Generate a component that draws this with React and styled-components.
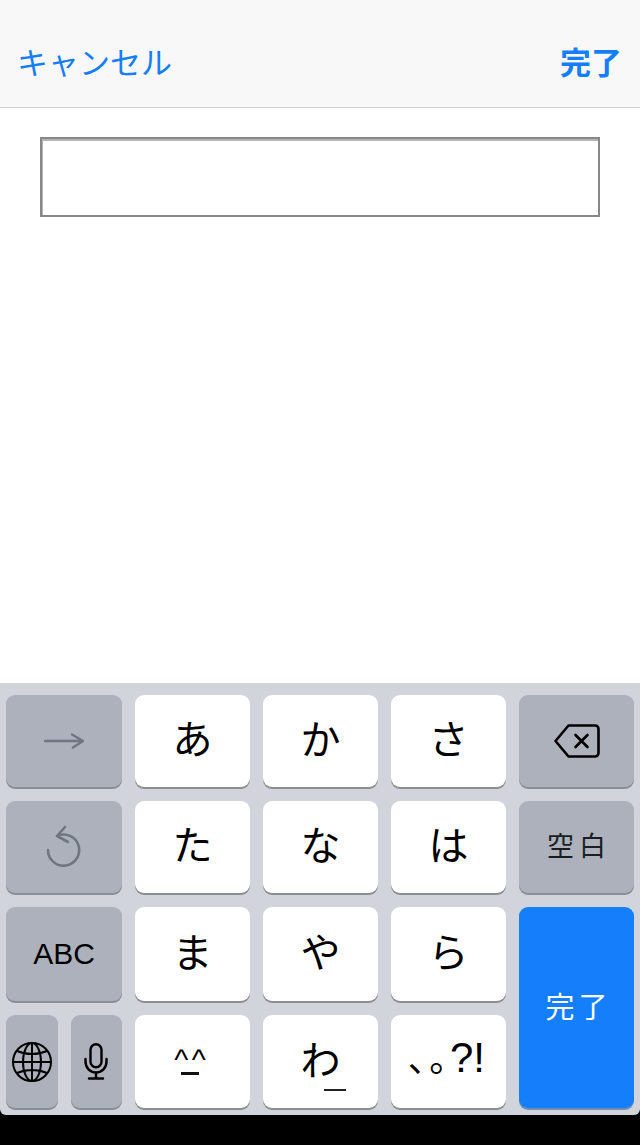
import React from 'react';
import styled, { createGlobalStyle } from 'styled-components';

const GlobalStyle = createGlobalStyle`
  html, body {
    margin: 0;
    padding: 0;
    background: #fff;
    font-family: "Liberation Sans", "Noto Sans CJK JP", sans-serif;
  }
`;

const BLUE = '#157efb';
const KANA_FONT = '"Noto Sans CJK JP", sans-serif';

const Page = styled.div`
  display: flex;
  flex-direction: column;
  width: 640px;
  height: 1145px;
  overflow: hidden;
`;

const NavBar = styled.header`
  display: flex;
  align-items: center;
  justify-content: space-between;
  box-sizing: border-box;
  height: 108px;
  padding: 14px 18px 0 17px;
  background: #f8f8f8;
  border-bottom: 1px solid #cfcfcf;
`;

const NavButton = styled.span`
  font-family: ${KANA_FONT};
  font-size: 31px;
  line-height: 38px;
  color: ${BLUE};
  font-weight: ${(props) => (props.$bold ? 700 : 400)};
`;

const Content = styled.main`
  flex: 1;
  padding: 29px 40px 0;
  background: #fff;
`;

const TextBox = styled.input`
  display: block;
  box-sizing: border-box;
  width: 560px;
  height: 80px;
  background: #fff;
  border: 2px solid #888;
  box-shadow: inset 1px 2px 0 #b4b4b4;
  border-radius: 0;
  outline: none;
`;

const Dock = styled.div`
  background: #000;
  padding-bottom: 30px;
`;

const Keyboard = styled.div`
  display: grid;
  grid-template-columns: 116px repeat(4, 115px);
  grid-template-rows: 92px 92px 94px 93px;
  gap: 14px 13px;
  box-sizing: border-box;
  height: 432px;
  padding: 12px 6px 7px;
  background: #d1d4db;
  border-bottom-left-radius: 6px;
  border-bottom-right-radius: 6px;
`;

const Key = styled.div`
  position: relative;
  display: flex;
  align-items: center;
  justify-content: center;
  min-width: 0;
  border-radius: 9px;
  color: #000;
  background: ${(props) => (props.$fn ? '#adb1bc' : '#fff')};
  box-shadow: 0 2px 0 ${(props) => (props.$fn ? '#8a8e98' : '#8b8d91')};
`;

const Kana = styled.span`
  font-family: ${KANA_FONT};
  font-size: 40px;
  line-height: 48px;
  margin-bottom: 8px;
`;

const LatinLabel = styled.span`
  font-family: "Liberation Sans", sans-serif;
  font-size: 30px;
  line-height: 36px;
`;

const SpaceLabel = styled.span`
  font-family: ${KANA_FONT};
  font-size: 27px;
  letter-spacing: 5px;
  margin: 0 -5px 5px 0;
  color: #1a1d22;
`;

const DoneKey = styled(Key)`
  grid-column: 5;
  grid-row: 3 / span 2;
  background: ${BLUE};
  box-shadow: 0 2px 0 #6f8fb8;
`;

const DoneLabel = styled.span`
  font-family: ${KANA_FONT};
  font-size: 29px;
  letter-spacing: 4px;
  margin: 0 -4px 6px 0;
  color: #fff;
`;

const SplitCell = styled.div`
  display: flex;
  gap: 13px;
`;

const SmallKey = styled(Key)`
  flex: 1;
`;

const Smiley = styled.span`
  display: flex;
  flex-direction: column;
  align-items: center;
  margin-right: 5px;
`;

const SmileyEyes = styled.span`
  font-family: "Liberation Sans", sans-serif;
  font-size: 30px;
  line-height: 24px;
  letter-spacing: 3.5px;
  margin-right: -3.5px;
`;

const SmileyMouth = styled.span`
  width: 18px;
  height: 2.5px;
  background: #111;
`;

const WaDash = styled.span`
  position: absolute;
  left: 61px;
  bottom: 17px;
  width: 22px;
  height: 2px;
  background: #222;
`;

const PunctRow = styled.span`
  display: flex;
  align-items: baseline;
  margin: 0 4px 9px 0;
`;

const PunctKana = styled.span`
  font-family: ${KANA_FONT};
  font-size: 36px;
  line-height: 44px;
  letter-spacing: 3px;
  font-feature-settings: "palt";
`;

const PunctLatin = styled.span`
  font-family: "Liberation Sans", sans-serif;
  font-size: 42px;
  line-height: 44px;
`;

const GlyphSvg = styled.svg`
  display: block;
  fill: none;
  stroke: ${(props) => props.$color || '#000'};
  stroke-width: ${(props) => props.$weight || 2};
  stroke-linecap: round;
  stroke-linejoin: round;
`;

const ArrowIcon = () => (
  <GlyphSvg width="40" height="16" viewBox="0 0 40 16" $color="#6f7681" $weight={2.4}>
    <path d="M1 8H39M28 1.5L39 8L29 14.5" />
  </GlyphSvg>
);

const UndoIcon = () => (
  <GlyphSvg width="40" height="48" viewBox="0 0 40 48" $color="#6f7681" $weight={2.6}>
    <path d="M13 13A15.6 15.6 0 1 1 4 27M21 4L13 13L24 19" />
  </GlyphSvg>
);

const DeleteIcon = () => (
  <GlyphSvg width="46" height="34" viewBox="0 0 46 34" $weight={2.6}>
    <path d="M14.5 1.5H41A3.5 3.5 0 0 1 44.5 5V29A3.5 3.5 0 0 1 41 32.5H14.5L1.5 17Z" />
    <path d="M21.5 11L33.5 23M33.5 11L21.5 23" />
  </GlyphSvg>
);

const GlobeIcon = () => (
  <GlyphSvg width="40" height="40" viewBox="0 0 40 40" $weight={2}>
    <circle cx="20" cy="20" r="19" />
    <ellipse cx="20" cy="20" rx="9" ry="19" />
    <path d="M20 1V39M1 20H39M5 9C14 13 26 13 35 9M5 31C14 27 26 27 35 31" />
  </GlyphSvg>
);

const MicIcon = () => (
  <GlyphSvg width="24" height="37" viewBox="0 0 24 37" $weight={2.4}>
    <rect x="6.5" y="1.2" width="11" height="23" rx="5.5" />
    <path d="M1.5 16V18.5C1.5 25 6 29.5 12 29.5C18 29.5 22.5 25 22.5 18.5V16M12 29.5V35.5M5 35.5H19" />
  </GlyphSvg>
);

const kanaRows = [
  ['あ', 'か', 'さ'],
  ['た', 'な', 'は'],
  ['ま', 'や', 'ら'],
];

const App = () => (
  <Page>
    <GlobalStyle />
    <NavBar>
      <NavButton>キャンセル</NavButton>
      <NavButton $bold>完了</NavButton>
    </NavBar>
    <Content>
      <TextBox type="text" />
    </Content>
    <Dock>
      <Keyboard>
        <Key $fn><ArrowIcon /></Key>
        {kanaRows[0].map((kana) => <Key key={kana}><Kana>{kana}</Kana></Key>)}
        <Key $fn><DeleteIcon /></Key>

        <Key $fn><UndoIcon /></Key>
        {kanaRows[1].map((kana) => <Key key={kana}><Kana>{kana}</Kana></Key>)}
        <Key $fn><SpaceLabel>空白</SpaceLabel></Key>

        <Key $fn><LatinLabel>ABC</LatinLabel></Key>
        {kanaRows[2].map((kana) => <Key key={kana}><Kana>{kana}</Kana></Key>)}
        <DoneKey><DoneLabel>完了</DoneLabel></DoneKey>

        <SplitCell>
          <SmallKey $fn><GlobeIcon /></SmallKey>
          <SmallKey $fn><MicIcon /></SmallKey>
        </SplitCell>
        <Key>
          <Smiley>
            <SmileyEyes>^^</SmileyEyes>
            <SmileyMouth />
          </Smiley>
        </Key>
        <Key>
          <Kana>わ</Kana>
          <WaDash />
        </Key>
        <Key>
          <PunctRow>
            <PunctKana>、。</PunctKana>
            <PunctLatin>?!</PunctLatin>
          </PunctRow>
        </Key>
      </Keyboard>
    </Dock>
  </Page>
);

export default App;
